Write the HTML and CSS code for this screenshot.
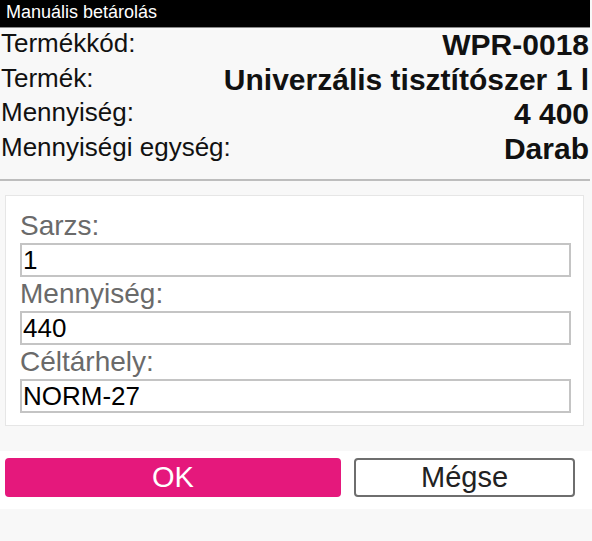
FILE: index.html
```html
<!DOCTYPE html>
<html lang="hu">
<head>
  <meta charset="UTF-8" />
  <title>Manuális betárolás</title>
  <meta name="viewport" content="width=device-width, initial-scale=1.0">
  <link rel="stylesheet" href="styles.css">
</head>
<body>
  <div class="page">
    <div class="title-bar">Manuális betárolás</div>

    <div class="info">
      <div class="info-row">
        <span class="info-label">Termékkód:</span>
        <span class="info-value">WPR-0018</span>
      </div>
      <div class="info-row">
        <span class="info-label">Termék:</span>
        <span class="info-value">Univerzális tisztítószer 1 l</span>
      </div>
      <div class="info-row">
        <span class="info-label">Mennyiség:</span>
        <span class="info-value">4 400</span>
      </div>
      <div class="info-row">
        <span class="info-label">Mennyiségi egység:</span>
        <span class="info-value">Darab</span>
      </div>
    </div>

    <div class="separator"></div>

    <form class="form-box">
      <label class="field-label" for="sarzs">Sarzs:</label>
      <input class="field-input" id="sarzs" type="text" value="1">
      <label class="field-label" for="qty">Mennyiség:</label>
      <input class="field-input" id="qty" type="text" value="440">
      <label class="field-label" for="target">Céltárhely:</label>
      <input class="field-input" id="target" type="text" value="NORM-27">
    </form>

    <div class="actions">
      <button class="btn btn-ok" type="button">OK</button>
      <button class="btn btn-cancel" type="button">Mégse</button>
    </div>
  </div>
</body>
</html>
```

FILE: styles.css
```css
* {
  box-sizing: border-box;
}

html, body {
  margin: 0;
  height: 100%;
  background: #f8f8f8;
  font-family: "Liberation Sans", Arial, sans-serif;
  color: #111;
}

.page {
  width: 590px;
}

.title-bar {
  height: 28px;
  padding: 2px 6px 0;
  background: #000;
  border-bottom: 1px solid #8a8a8a;
  color: #fff;
  font-size: 18px;
}

.info {
  padding: 0 1px;
}

.info-row {
  display: flex;
  justify-content: space-between;
  align-items: flex-start;
  height: 34.5px;
}

.info-label {
  font-size: 26px;
  color: #111;
}

.info-value {
  font-size: 30px;
  font-weight: bold;
  color: #111;
  white-space: nowrap;
}

.separator {
  margin-top: 13px;
  border-top: 2px solid #bdbdbd;
}

.form-box {
  display: flex;
  flex-direction: column;
  margin: 14px 6px 0 5px;
  padding: 13px 12px 12px 14px;
  background: #fff;
  border: 1px solid #e6e6e6;
}

.field-label {
  height: 34px;
  line-height: 34px;
  font-size: 28px;
  color: #6a6a6a;
}

.field-input {
  height: 34px;
  margin: 0;
  padding: 0 1px;
  border: 2px solid #c4c4c4;
  border-radius: 0;
  background: #fff;
  font-family: "Liberation Sans", Arial, sans-serif;
  font-size: 26px;
  color: #000;
  outline: none;
}

.actions {
  display: flex;
  gap: 13px;
  margin-top: 25px;
  padding: 7px 0 12px 5px;
  width: 592px;
  background: #fff;
}

.btn {
  height: 39px;
  padding: 0;
  border-radius: 4px;
  font-family: "Liberation Sans", Arial, sans-serif;
  font-size: 29px;
  cursor: pointer;
}

.btn-ok {
  width: 336px;
  background: #e5187c;
  border: none;
  color: #fff;
}

.btn-cancel {
  width: 221px;
  background: #fff;
  border: 2px solid #6e6e6e;
  color: #222;
}
```
